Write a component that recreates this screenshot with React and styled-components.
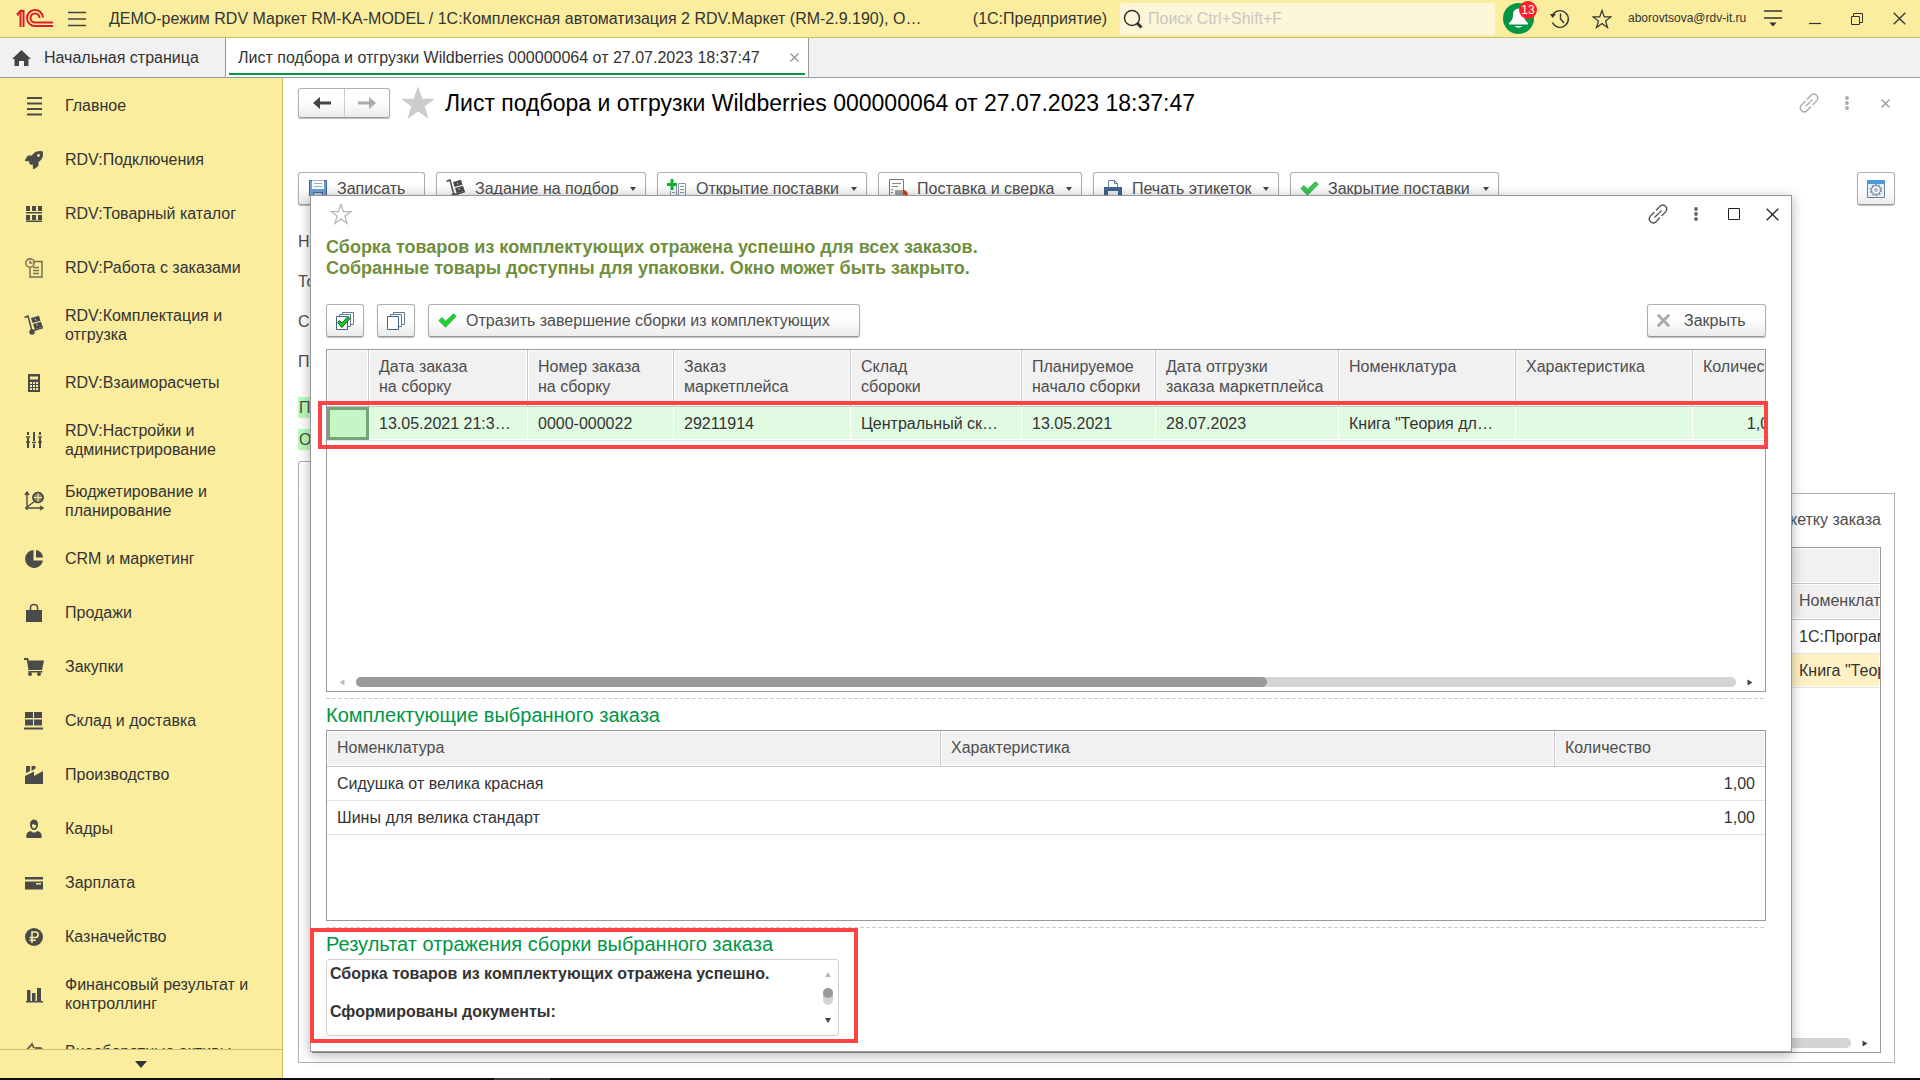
import React from 'react';
import styled, { createGlobalStyle } from 'styled-components';
import { FaRocket } from 'react-icons/fa6';

const GlobalStyle = createGlobalStyle`
    *, *::before, *::after {
        box-sizing: border-box;
    }
    body {
        margin: 0;
        overflow: hidden;
        background: #fff;
        color: #333;
        font-family: "Liberation Sans", Arial, sans-serif;
        font-size: 16px;
        line-height: 19px;
    }
    button, input {
        font: inherit;
        color: inherit;
    }
    svg {
        display: block;
        flex: none;
    }
`;

/* ---------- icons ---------- */

const Svg = ({ size = 20, width, height, box, children, ...rest }) => (
    <svg
        width={width || size}
        height={height || size}
        viewBox={box || `0 0 ${width || size} ${height || size}`}
        fill="none"
        aria-hidden="true"
        {...rest}
    >
        {children}
    </svg>
);

const LogoIcon = () => (
    <Svg width={38} height={20} stroke="#d8202a" strokeWidth="2">
        <path d="M1 5.500 4.500 2v16M1 5.500h2M7.500 1v17M4.500 2h3" />
        <path d="M27 8.500A8 8 0 1 0 19 17h18" />
        <path d="M23.500 9A4.500 4.500 0 1 0 19 13.500h18" />
    </Svg>
);

const BurgerIcon = () => (
    <Svg width={18} height={16} stroke="#444" strokeWidth="1.4">
        <path d="M0 1.500h18M0 8h18M0 14.500h18" />
    </Svg>
);

const HomeIcon = () => (
    <Svg width={19} height={16} fill="#444">
        <path fill="#444" d="M9.500 0 0 9h2.500v7h4.500v-5h5v5h4.500V9H19z" />
    </Svg>
);

const SearchIcon = () => (
    <Svg size={20} stroke="#333">
        <circle cx="9" cy="9" r="7.500" strokeWidth="1.500" />
        <path d="m14 14 4.500 4.500" strokeWidth="3" />
    </Svg>
);

const BellIcon = () => (
    <Svg size={31}>
        <circle cx="15.500" cy="15.500" r="15.500" fill="#009646" />
        <path
            fill="#fff"
            d="M15.500 5.500c-3.500 0-5.500 3-5.500 6.500 0 4-1.500 6-4 8v1.500h19V20c-2.500-2-4-4-4-8 0-3.500-2-6.500-5.500-6.500zM12 23h7c-.5 2-6.500 2-7 0z"
        />
    </Svg>
);

const HistoryIcon = () => (
    <Svg size={20} stroke="#333" strokeWidth="1.400">
        <path d="M2.500 6.500A8.300 8.300 0 1 1 2.500 13.500" />
        <path d="M10.500 4.500V10l3.500 4" />
        <path fill="#333" stroke="none" d="m0 5 6 0-3.500 4z" />
    </Svg>
);

const StarIcon = ({ size = 22, fill = 'none', stroke = '#333' }) => (
    <Svg size={size} box="0 0 22 22" stroke={stroke} strokeWidth="1.300">
        <path
            fill={fill}
            d="m11 1.500 2.500 7.100 7.300.1-5.900 4.400 2.200 7.300-6.100-4.400-6.100 4.400 2.200-7.300L1.200 8.700l7.300-.1z"
        />
    </Svg>
);

const ServiceIcon = () => (
    <Svg width={18} height={17} stroke="#333" strokeWidth="1.400">
        <path d="M0 1h18M0 8h18" />
        <path fill="#333" stroke="none" d="M5.500 12.500h7L9 16.500z" />
    </Svg>
);

const MinimizeIcon = () => (
    <Svg width={12} height={12} stroke="#333" strokeWidth="1.200">
        <path d="M0 10.500h12" />
    </Svg>
);

const RestoreIcon = () => (
    <Svg size={12} stroke="#333">
        <path d="M.5 3.500h8v8h-8zM2.500 3.500v-3h9v9h-3" />
    </Svg>
);

const SquareIcon = () => (
    <Svg size={12} stroke="#222">
        <path d="M.5.5h11v11H.5z" />
    </Svg>
);

const CrossIcon = ({ size = 13, color = '#333', weight = 1.3 }) => (
    <Svg size={size} box="0 0 13 13" stroke={color} strokeWidth={weight}>
        <path d="m.7.7 11.600 11.600M12.300.7.7 12.300" />
    </Svg>
);

const LinkIcon = ({ color }) => (
    <Svg size={20} stroke={color} strokeWidth="1.400" strokeLinecap="round">
        <path d="m8.500 6 3.500-3.700c3.500-3.300 9 1.300 5.600 5.600L14 11.500" />
        <path d="m11.500 14-3.500 3.700c-3.500 3.300-9-1.300-5.600-5.600L6 8.500" />
        <path d="m7 13 6-6" strokeDasharray="5 1.500" />
    </Svg>
);

const DotsIcon = ({ color }) => (
    <Svg width={4} height={14} fill={color}>
        <circle fill={color} cx="2" cy="2" r="1.900" />
        <circle fill={color} cx="2" cy="7" r="1.900" />
        <circle fill={color} cx="2" cy="12" r="1.900" />
    </Svg>
);

const ArrowIcon = ({ color, flip }) => (
    <Svg width={18} height={12} stroke={color} strokeWidth="3">
        <g transform={flip ? 'matrix(-1 0 0 1 18 0)' : undefined}>
            <path d="M5 6h13" />
            <path fill={color} stroke="none" d="M0 6 7 0v12z" />
        </g>
    </Svg>
);

const CheckIcon = ({ color }) => (
    <Svg width={19} height={15}>
        <path fill={color} stroke="#12953a" strokeWidth=".6" d="m.8 7.500 3.200-3 3.500 3.700L15.500.7l2.800 2.600L7.500 14.300z" />
    </Svg>
);

const SaveIcon = () => (
    <Svg size={20}>
        <path fill="#6f9fd8" stroke="#3f6390" d="M1.500 1.500h17v17h-15l-2-2z" />
        <path fill="#fff" d="M4 1.500h12V10H4z" />
        <path stroke="#8bb0d0" d="M6 4.500h8M6 7.500h8" />
        <path fill="#bcc8d4" stroke="#3f6390" d="M5.500 13.500h9v5h-9z" />
    </Svg>
);

const TrolleyIcon = () => (
    <Svg size={20} stroke="#4a4a4a" strokeWidth="1.500">
        <path d="M.5 2.500 4 1l4 15 11-3.500" />
        <circle cx="8" cy="17" r="2" fill="#4a4a4a" />
        <path fill="#4a4a4a" stroke="none" d="m7 3 8-2.300 1.500 5-8 2.300zM9 9l8-2.300 1.700 5.100-8 2.500z" />
        <path stroke="#bbb" strokeWidth="1" d="m11 3.500 1 2M12.500 9l1 2" />
    </Svg>
);

const OpenSupplyIcon = () => (
    <Svg size={20}>
        <path stroke="#0ab52a" strokeWidth="3" d="M5 0v11M0 5.500h10" />
        <path stroke="#8496a5" d="M3.500 12v7.500h6V6M11.500 4.500h7v15h-7z" />
        <path stroke="#8496a5" d="M5 13.500h3M5 16.500h3M13 7.500h4M13 10.500h4M13 13.500h4M13 16.500h4" />
    </Svg>
);

const VerifyIcon = () => (
    <Svg size={20}>
        <path stroke="#777" d="M1.500.5h14v19h-14z" />
        <path stroke="#888" d="M4 4.500h9M4 7.500h6M3 10.500h2M3 13.500h2M3 16.500h2" />
        <path fill="#a0a0a0" d="M7 11h8v7H7z" />
        <path fill="#e0351b" d="M15 11c3 0 5 2 5 6h-5z" />
    </Svg>
);

const PrinterIcon = () => (
    <Svg size={20}>
        <path fill="#fff" stroke="#5f7f9f" d="M5.500 8V1.500h6l3 3V8M11.500 1.500v3h3" />
        <path fill="#3f6387" d="M1 8h18v8H1z" />
        <path fill="#e6edf4" d="M5 12h10v6H5z" />
    </Svg>
);

const GearWindowIcon = () => (
    <Svg size={20}>
        <path fill="#e6eef5" stroke="#6d8299" d="M1.500 1.500h17v17h-17z" />
        <path fill="#4a9bdc" d="M1 1h18v4H1z" />
        <circle cx="10" cy="11" r="5" fill="#fff" stroke="#7b8fa3" strokeWidth="2" strokeDasharray="2 1.100" />
        <circle cx="10" cy="11" r="4.300" fill="#fff" stroke="#7b8fa3" />
        <circle cx="10" cy="11" r="1.400" stroke="#7b8fa3" />
    </Svg>
);

const SheetsIcon = ({ checked }) => (
    <Svg size={20}>
        <path fill="#fff" stroke="#5d7d99" d="M7.500 12V1.500h11v12H16" />
        <path fill="#fff" stroke="#5d7d99" d="M4.500 14V3.500h11v12H13" />
        <path fill="#fff" stroke="#3f6485" d="M1.500 5.500h11v13h-11z" />
        {checked && <path fill="#14cc22" stroke="#0b5a14" d="m2.500 11.500 2-2 2.500 2.500 6-6.500 2 2L7 16.500z" />}
    </Svg>
);

const CaretIcon = () => (
    <Svg width={6} height={4}>
        <path fill="#444" d="M0 0h6L3 4z" />
    </Svg>
);

const dark = '#4a4a4a';

const sideIcons = {
    main: (
        <path stroke={dark} strokeWidth="2" d="M3 2h15M3 7.500h15M3 13h15M3 18.500h15" />
    ),
    catalog: (
        <path
            fill={dark}
            d="M2 2h4v5H2zM8 2h4v5H8zM14 2h4v5h-4zM2 8h16v1.500H2zM2 11h4v5H2zM8 11h4v5H8zM14 11h4v5h-4zM2 16.500h16V18H2z"
        />
    ),
    orders: (
        <g stroke="#75704f" strokeWidth="1.500">
            <path d="M10 3.500h8V19H6v-9" />
            <circle cx="6" cy="5" r="4.200" />
            <path d="M6 2.500V5h2.500M9 9.500h6M9 12.500h6M9 15.500h6" />
        </g>
    ),
    calc: (
        <path
            fill={dark}
            fillRule="evenodd"
            d="M4 1h12v18H4zM6 3.500v3h8v-3zM6 9v2h2V9zM9 9v2h2V9zM12 9v2h2V9zM6 12v2h2v-2zM9 12v2h2v-2zM12 12v2h2v-2zM6 15v2h2v-2zM9 15v2h2v-2zM12 15v2h2v-2z"
        />
    ),
    sliders: (
        <g stroke={dark} strokeWidth="2">
            <path d="M4 2v3M4 8v10M10 2v9M10 14v4M16 2v3M16 8v10" />
            <path d="M2 7h4M8 12.500h4M14 7h4M2 12h4M14 12h4" strokeWidth="1.500" />
        </g>
    ),
    budget: (
        <g stroke={dark} strokeWidth="1.400">
            <path d="M3 2v17M1 17h17M1 4l2-3 2 3M16 15l3 2-3 2M3 16l8-6" />
            <circle cx="14" cy="6.500" r="5" fill="#8a8360" />
            <path d="M14 2v9M10 6.500h8" stroke="#f8ec9e" strokeWidth="1" />
            <circle cx="14" cy="6.500" r="5" />
        </g>
    ),
    pie: (
        <g fill={dark}>
            <path d="M9.500 1A9 9 0 1 0 19 11.500H9.500z" />
            <path d="M12 1v7.500h7A8 8 0 0 0 12 1z" />
        </g>
    ),
    bag: (
        <g>
            <path fill={dark} d="M2 7h16v12H2z" />
            <path stroke={dark} strokeWidth="1.500" d="M6.500 9V4.500c0-4 7-4 7 0V9" />
        </g>
    ),
    cart: (
        <g fill={dark}>
            <path d="M0 1h4l.8 2.500H20L18 13H4.500L2.800 3H0zM4.500 14h14v1.500h-14z" />
            <circle cx="6" cy="17" r="2" />
            <circle cx="15" cy="17" r="2" />
        </g>
    ),
    stock: <path fill={dark} d="M1 1h8v6H1zM10 1h8v6h-8zM1 8.500h8v6H1zM10 8.500h8v6h-8zM0 16.500h19v2H0z" />,
    factory: <path fill={dark} d="M2 1h4v5L2 8zM7.500 1h4v2.500l-4 2.500zM1 11l9-4.500v4.500l9-5v13H1z" />,
    person: (
        <g fill={dark}>
            <path fillRule="evenodd" d="M6 5c0-6 8-6 8 0 0 8-8 8-8 0zm1.800 1c.4 4.500 4 4.500 4.400 0-1.500 0-2.500-.5-3-1z" />
            <path d="M2.500 19c-1-5 2-6.500 4.500-7 1.500 2 4.500 2 6 0 2.500.5 5.500 2 4.500 7z" />
        </g>
    ),
    card: <path fill={dark} fillRule="evenodd" d="M1 4h18v2.500H1zM1 8.500h18v8H1zM12 10v1.500h5V10z" />,
    ruble: (
        <g>
            <circle cx="10" cy="10" r="9" fill={dark} />
            <path stroke="#f8ec9e" strokeWidth="1.600" d="M8 16V5h3.500c3.500 0 3.500 5.500 0 5.500H5.500M5.500 13.300H12" />
        </g>
    ),
    bars: <path fill={dark} d="M3 6h3.500v11H3zM8 9h3.500v8H8zM13 4h4v13h-4zM2 17h17v1.500H2z" />,
    assets: (
        <g stroke="#6b6548" strokeWidth="2">
            <path d="m2 9 6-7 2 4M1 11h5" />
            <path d="M12 6h4c3 0 3 6 0 6h-4z" />
        </g>
    ),
};

const menu = [
    ['main', 'Главное'],
    ['rocket', 'RDV:Подключения'],
    ['catalog', 'RDV:Товарный каталог'],
    ['orders', 'RDV:Работа с заказами'],
    ['trolley', 'RDV:Комплектация и отгрузка'],
    ['calc', 'RDV:Взаиморасчеты'],
    ['sliders', 'RDV:Настройки и администрирование'],
    ['budget', 'Бюджетирование и планирование'],
    ['pie', 'CRM и маркетинг'],
    ['bag', 'Продажи'],
    ['cart', 'Закупки'],
    ['stock', 'Склад и доставка'],
    ['factory', 'Производство'],
    ['person', 'Кадры'],
    ['card', 'Зарплата'],
    ['ruble', 'Казначейство'],
    ['bars', 'Финансовый результат и контроллинг'],
    ['assets', 'Внеоборотные активы'],
];

const commands = [
    { text: 'Записать', icon: <SaveIcon />, width: 127 },
    { text: 'Задание на подбор', icon: <TrolleyIcon />, width: 210, caret: true },
    { text: 'Открытие поставки', icon: <OpenSupplyIcon />, width: 210, caret: true },
    { text: 'Поставка и сверка', icon: <VerifyIcon />, width: 204, caret: true },
    { text: 'Печать этикеток', icon: <PrinterIcon />, width: 186, caret: true },
    { text: 'Закрытие поставки', icon: <CheckIcon color="#3cc653" />, width: 209, caret: true },
];

const orderColumns = [
    { title: '', width: 42 },
    { title: 'Дата заказа\nна сборку', width: 159, value: '13.05.2021 21:3…' },
    { title: 'Номер заказа\nна сборку', width: 146, value: '0000-000022' },
    { title: 'Заказ\nмаркетплейса', width: 177, value: '29211914' },
    { title: 'Склад\nсбороки', width: 171, value: 'Центральный ск…' },
    { title: 'Планируемое\nначало сборки', width: 134, value: '13.05.2021' },
    { title: 'Дата отгрузки\nзаказа маркетплейса', width: 183, value: '28.07.2023' },
    { title: 'Номенклатура', width: 177, value: 'Книга "Теория дл…' },
    { title: 'Характеристика', width: 177, value: '' },
    { title: 'Количество', width: 95, value: '1,00', right: true },
];

const parts = [
    ['Сидушка от велика красная', '1,00'],
    ['Шины для велика стандарт', '1,00'],
];

function SideIcon({ name }) {
    if (name === 'rocket') return <FaRocket size={18} color={dark} />;
    if (name === 'trolley') return <TrolleyIcon />;
    return <Svg>{sideIcons[name]}</Svg>;
}

function TitleBar() {
    return (
        <Top>
            <LogoIcon />
            <IconButton $ml={14} aria-label="Меню"><BurgerIcon /></IconButton>
            <AppTitle>
                <span>ДЕМО-режим RDV Маркет RM-KA-MODEL / 1С:Комплексная автоматизация 2 RDV.Маркет (RM-2.9.190), О…</span>
                <span>(1С:Предприятие)</span>
            </AppTitle>
            <Search>
                <SearchIcon />
                <SearchInput type="text" aria-label="Поиск" placeholder="Поиск Ctrl+Shift+F" />
            </Search>
            <TopActions>
                <Notifications aria-label="Оповещения">
                    <BellIcon />
                    <Badge>13</Badge>
                </Notifications>
                <Slot><IconButton aria-label="История"><HistoryIcon /></IconButton></Slot>
                <Slot><IconButton aria-label="Избранное"><StarIcon size={20} /></IconButton></Slot>
                <User href="#user">aborovtsova@rdv-it.ru</User>
                <Slot><IconButton aria-label="Сервис"><ServiceIcon /></IconButton></Slot>
                <Slot><IconButton aria-label="Свернуть"><MinimizeIcon /></IconButton></Slot>
                <Slot><IconButton aria-label="Восстановить"><RestoreIcon /></IconButton></Slot>
                <Slot><IconButton aria-label="Закрыть приложение"><CrossIcon /></IconButton></Slot>
            </TopActions>
        </Top>
    );
}

function Document() {
    return (
        <Page>
            <PageHead>
                <NavButtons>
                    <NavButton aria-label="Назад"><ArrowIcon color="#444" /></NavButton>
                    <NavButton aria-label="Вперед"><ArrowIcon color="#aaa" flip /></NavButton>
                </NavButtons>
                <IconButton $ml={12} aria-label="В избранное"><StarIcon size={32} fill="#ccc" stroke="#ccc" /></IconButton>
                <PageTitle>Лист подбора и отгрузки Wildberries 000000064 от 27.07.2023 18:37:47</PageTitle>
                <Tools $overhang={9}>
                    <IconButton aria-label="Ссылка"><LinkIcon color="#aaa" /></IconButton>
                    <IconButton aria-label="Еще"><DotsIcon color="#aaa" /></IconButton>
                    <IconButton aria-label="Закрыть страницу"><CrossIcon size={9} color="#999" weight={2} /></IconButton>
                </Tools>
            </PageHead>
            <Toolbar>
                {commands.map((c) => (
                    <Button key={c.text} $width={c.width}>
                        {c.icon}
                        {c.text}
                        {c.caret && <Caret><CaretIcon /></Caret>}
                    </Button>
                ))}
                <Spacer />
                <Button $square aria-label="Настройки"><GearWindowIcon /></Button>
            </Toolbar>
            <Fields>
                <Field>Номер:</Field>
                <Field>Товар:</Field>
                <Field>Склад:</Field>
                <Field>Поставка:</Field>
            </Fields>
            <Chips>
                <Chip>Подбор</Chip>
                <Chip>Отгрузка</Chip>
            </Chips>
            <PageTab />
            <Panel>
                <PanelLine>Печатать этикетку заказа</PanelLine>
                <Frame>
                    <Table>
                        <colgroup>
                            <col />
                            <col width="91" />
                        </colgroup>
                        <thead>
                            <tr><Th $height={36} colSpan={2} /></tr>
                            <tr><Th $height={36} /><Th $height={36}>Номенклатура</Th></tr>
                        </thead>
                        <tbody>
                            <tr><Td /><Td>1С:Программа</Td></tr>
                            <tr><Td $fill="#fff1c4" /><Td $fill="#fff1c4">Книга "Теория</Td></tr>
                        </tbody>
                    </Table>
                    <Spacer />
                    <HScroll>
                        <Tri $dir="left" $muted />
                        <Track><Thumb style={{ width: '45%' }} /></Track>
                        <Tri $dir="right" />
                    </HScroll>
                </Frame>
            </Panel>
        </Page>
    );
}

function AssemblyWindow() {
    return (
        <Window role="dialog" aria-label="Сборка из комплектующих">
            <WindowHead>
                <IconButton aria-label="В избранное"><StarIcon stroke="#b3b8be" /></IconButton>
                <Spacer />
                <Tools $overhang={25}>
                    <IconButton aria-label="Ссылка"><LinkIcon color="#555" /></IconButton>
                    <IconButton aria-label="Еще"><DotsIcon color="#666" /></IconButton>
                    <IconButton aria-label="Развернуть"><SquareIcon /></IconButton>
                    <IconButton aria-label="Закрыть окно"><CrossIcon color="#222" /></IconButton>
                </Tools>
            </WindowHead>
            <Message>
                Сборка товаров из комплектующих отражена успешно для всех заказов.<br />
                Собранные товары доступны для упаковки. Окно может быть закрыто.
            </Message>
            <WindowBar>
                <Button $square aria-label="Выделить все"><SheetsIcon checked /></Button>
                <Button $square aria-label="Снять выделение"><SheetsIcon /></Button>
                <Button $width={432}><CheckIcon color="#1fd12d" />Отразить завершение сборки из комплектующих</Button>
                <Spacer />
                <Button $width={119} $gap={14}><CrossIcon color="#aaa" weight={3} />Закрыть</Button>
            </WindowBar>
            <OrdersArea>
                <Frame>
                    <Table $width={1461}>
                        <colgroup>
                            {orderColumns.map((c, i) => <col key={i} width={c.width} />)}
                        </colgroup>
                        <thead>
                            <tr>
                                {orderColumns.map((c, i) => <Th key={i} $height={57}>{c.title}</Th>)}
                            </tr>
                        </thead>
                        <tbody>
                            <tr>
                                {orderColumns.map((c, i) => (
                                    <Td key={i} $fill="#e1fae2" $right={c.right} $current={i === 0}>{c.value}</Td>
                                ))}
                            </tr>
                        </tbody>
                    </Table>
                    <Spacer />
                    <HScroll>
                        <Tri $dir="left" $muted />
                        <Track><Thumb style={{ width: '66%' }} /></Track>
                        <Tri $dir="right" />
                    </HScroll>
                </Frame>
                <RowMark />
            </OrdersArea>
            <Divider />
            <GroupTitle>Комплектующие выбранного заказа</GroupTitle>
            <PartsFrame>
                <Table>
                    <colgroup>
                        <col />
                        <col />
                        <col width="210" />
                    </colgroup>
                    <thead>
                        <tr>
                            <Th $height={36}>Номенклатура</Th>
                            <Th $height={36}>Характеристика</Th>
                            <Th $height={36}>Количество</Th>
                        </tr>
                    </thead>
                    <tbody>
                        {parts.map(([name, qty]) => (
                            <tr key={name}><Td>{name}</Td><Td /><Td $right>{qty}</Td></tr>
                        ))}
                    </tbody>
                </Table>
            </PartsFrame>
            <Divider />
            <Result>
                <GroupTitle>Результат отражения сборки выбранного заказа</GroupTitle>
                <ResultBox>
                    <ResultText>
                        <p>Сборка товаров из комплектующих отражена успешно.</p>
                        <p>Сформированы документы:</p>
                    </ResultText>
                    <VScroll>
                        <Tri $dir="up" $muted />
                        <VTrack><VThumb /></VTrack>
                        <Tri $dir="down" />
                    </VScroll>
                </ResultBox>
                <ResultMark />
            </Result>
        </Window>
    );
}

function App() {
    return (
        <Shell>
            <GlobalStyle />
            <TitleBar />
            <Tabs>
                <Tab href="#home"><HomeIcon />Начальная страница</Tab>
                <ActiveTab>
                    <a href="#sheet">Лист подбора и отгрузки Wildberries 000000064 от 27.07.2023 18:37:47</a>
                    <IconButton aria-label="Закрыть вкладку"><CrossIcon size={9} color="#999" weight={2} /></IconButton>
                </ActiveTab>
            </Tabs>
            <Body>
                <Sidebar>
                    <MenuList>
                        {menu.map(([icon, text]) => (
                            <MenuItem key={text} href="#section">
                                <MenuGlyph><SideIcon name={icon} /></MenuGlyph>
                                <span>{text}</span>
                            </MenuItem>
                        ))}
                    </MenuList>
                    <MoreButton aria-label="Прокрутить вниз">
                        <Svg width={12} height={7}><path fill="#333" d="M0 0h12L6 7z" /></Svg>
                    </MoreButton>
                </Sidebar>
                <Document />
                <AssemblyWindow />
            </Body>
            <Taskbar><TaskbarItem /></Taskbar>
        </Shell>
    );
}

/* ---------- shell ---------- */

const Shell = styled.div`
    display: flex;
    flex-direction: column;
    height: 100vh;
`;

const Spacer = styled.div`
    flex: 1;
`;

const IconButton = styled.button`
    display: flex;
    align-items: center;
    justify-content: center;
    flex: none;
    padding: 0;
    margin-left: ${(p) => p.$ml || 0}px;
    border: none;
    background: none;
`;

const Top = styled.header`
    display: flex;
    align-items: center;
    flex: none;
    height: 38px;
    padding-left: 16px;
    border-bottom: 1px solid #c9bd6d;
    background: #fbed9e;
`;

const AppTitle = styled.div`
    display: flex;
    flex: 1;
    justify-content: space-between;
    min-width: 0;
    margin: 0 13px 0 23px;
    white-space: nowrap;
`;

const Search = styled.label`
    display: flex;
    align-items: center;
    gap: 5px;
    width: 375px;
    height: 32px;
    padding-left: 3px;
    border-radius: 3px;
    background: #fdf6d8;
`;

const SearchInput = styled.input`
    flex: 1;
    min-width: 0;
    padding: 0;
    border: none;
    outline: none;
    background: none;
    &::placeholder {
        color: #c9c8c0;
        opacity: 1;
    }
`;

const TopActions = styled.div`
    display: flex;
    align-items: center;
    padding-left: 8px;
`;

const Notifications = styled.button`
    position: relative;
    margin-right: 5px;
    padding: 0;
    border: none;
    background: none;
`;

const Badge = styled.span`
    position: absolute;
    top: -2px;
    right: -3px;
    width: 18px;
    height: 18px;
    border-radius: 9px;
    background: #ff2027;
    color: #fff;
    font-size: 12px;
    line-height: 18px;
    text-align: center;
`;

const Slot = styled.div`
    display: flex;
    justify-content: center;
    width: 42px;
`;

const User = styled.a`
    width: 129px;
    padding-left: 5px;
    color: #333;
    font-size: 12px;
    text-decoration: none;
    white-space: nowrap;
`;

const Tabs = styled.nav`
    display: flex;
    flex: none;
    height: 40px;
    border-bottom: 1px solid #999;
    background: #f1f1f1;
`;

const Tab = styled.a`
    display: flex;
    align-items: center;
    gap: 13px;
    width: 226px;
    padding-left: 12px;
    border-right: 1px solid #999;
    color: #333;
    text-decoration: none;
`;

const ActiveTab = styled.div`
    display: flex;
    align-items: center;
    justify-content: space-between;
    width: 583px;
    padding: 0 9px 0 12px;
    border-right: 1px solid #999;
    background: linear-gradient(#009646, #009646) 3px 35px / 576px 2px no-repeat #fff;
    a {
        color: #333;
        text-decoration: none;
        white-space: nowrap;
    }
`;

const Body = styled.div`
    position: relative;
    display: flex;
    flex: 1;
    min-height: 0;
`;

const Taskbar = styled.footer`
    flex: none;
    height: 2px;
    padding-left: 494px;
    background: #0d0d0f;
`;

const TaskbarItem = styled.div`
    width: 56px;
    height: 2px;
    background: #3a3a3c;
`;

/* ---------- sections panel ---------- */

const Sidebar = styled.aside`
    display: flex;
    flex-direction: column;
    flex: none;
    width: 283px;
    border-right: 1px solid #c9bd6d;
    background: #fbed9e;
`;

const MenuList = styled.nav`
    flex: 1;
    min-height: 0;
    overflow: hidden;
`;

const MenuItem = styled.a`
    display: flex;
    align-items: center;
    gap: 21px;
    min-height: 54px;
    padding: 12px 20px 11px 24px;
    color: #333;
    text-decoration: none;
`;

const MenuGlyph = styled.span`
    display: flex;
    justify-content: center;
    flex: none;
    width: 20px;
`;

const MoreButton = styled.button`
    display: flex;
    align-items: center;
    justify-content: center;
    flex: none;
    height: 29px;
    border: none;
    border-top: 1px solid #c9bd6d;
    background: none;
`;

/* ---------- document page ---------- */

const Page = styled.main`
    display: flex;
    flex-direction: column;
    flex: 1;
    min-width: 0;
    padding: 10px 25px 15px 15px;
    color: #4d4d4d;
`;

const PageHead = styled.div`
    display: flex;
    align-items: center;
    height: 30px;
`;

const NavButtons = styled.div`
    display: flex;
    height: 30px;
    border: 1px solid #b0b0b0;
    border-bottom-color: #999;
    border-radius: 3px;
    background: linear-gradient(#fff 40%, #ececec);
    box-shadow: 0 1px 1px #bbb;
`;

const NavButton = styled.button`
    display: flex;
    align-items: center;
    justify-content: center;
    width: 45px;
    padding: 0;
    border: none;
    background: none;
    & + & {
        border-left: 1px solid #ccc;
    }
`;

const PageTitle = styled.h1`
    flex: 1;
    margin: 0 0 0 11px;
    color: #000;
    font-size: 23px;
    font-weight: normal;
    line-height: 30px;
    white-space: nowrap;
`;

/* the icon cells are wider than the icons, so the last one hangs over the content edge */
const Tools = styled.div`
    display: flex;
    align-items: center;
    margin-right: -${(p) => p.$overhang}px;
    ${IconButton} {
        width: 38px;
        height: 30px;
    }
`;

const Toolbar = styled.div`
    display: flex;
    gap: 11px;
    margin-top: 54px;
`;

const Button = styled.button`
    display: flex;
    align-items: center;
    justify-content: ${(p) => (p.$square ? 'center' : 'flex-start')};
    gap: ${(p) => p.$gap || 9}px;
    flex: none;
    width: ${(p) => (p.$square ? 38 : p.$width)}px;
    height: 33px;
    padding: 0 ${(p) => (p.$square ? 0 : 9)}px;
    border: 1px solid #b0b0b0;
    border-bottom-color: #999;
    border-radius: 3px;
    background: linear-gradient(#fff 40%, #ececec);
    box-shadow: 0 1px 1px #bbb;
    color: #4d4d4d;
    white-space: nowrap;
`;

const Caret = styled.span`
    margin-left: auto;
`;

const Fields = styled.div`
    margin-top: 17px;
`;

const Field = styled.div`
    height: 40px;
    line-height: 40px;
`;

const Chips = styled.div`
    display: flex;
    flex-direction: column;
    align-items: flex-start;
    gap: 11px;
    margin: 15px 0 11px;
`;

const Chip = styled.span`
    padding: 1px;
    background: #b9fdb9;
`;

const PageTab = styled.div`
    width: 200px;
    height: 32px;
    border: 1px solid #b0b0b0;
    border-bottom: none;
    border-radius: 3px 0 0 0;
`;

const Panel = styled.section`
    display: flex;
    flex-direction: column;
    flex: 1;
    min-height: 0;
    padding: 0 13px 9px;
    border: 1px solid #b0b0b0;
    border-top-color: transparent;
    background: linear-gradient(#b0b0b0, #b0b0b0) 100% 0 / calc(100% - 199px) 1px no-repeat border-box;
`;

const PanelLine = styled.div`
    padding: 16px 0 18px;
    text-align: right;
`;

/* ---------- tables ---------- */

const Frame = styled.div`
    display: flex;
    flex-direction: column;
    flex: 1;
    min-height: 0;
    border: 1px solid #999;
    background: #fff;
    overflow: hidden;
`;

const PartsFrame = styled(Frame)`
    flex: none;
    height: 191px;
`;

const Table = styled.table`
    flex: none;
    width: ${(p) => (p.$width ? `${p.$width}px` : '100%')};
    border-collapse: separate;
    border-spacing: 0;
    table-layout: fixed;
`;

const Th = styled.th`
    height: ${(p) => p.$height}px;
    padding: 7px 0 0 10px;
    border-right: 1px solid #c6c6c6;
    border-bottom: 1px solid #c6c6c6;
    background: #f1f1f1;
    box-shadow: inset 0 0 0 1px #fff;
    color: #4d4d4d;
    font-weight: normal;
    line-height: 20px;
    text-align: left;
    vertical-align: top;
    white-space: pre;
    overflow: hidden;
    &:last-child {
        border-right: none;
    }
`;

const Td = styled.td`
    height: 34px;
    padding: 0 10px;
    border-bottom: 1px solid #e2e2e2;
    background: ${(p) => p.$fill || '#fff'};
    box-shadow: ${(p) => (p.$current ? 'inset 0 0 0 3px #74a578' : 'inset -1px -1px 0 #fff')};
    color: #333;
    text-align: ${(p) => (p.$right ? 'right' : 'left')};
    white-space: nowrap;
    overflow: hidden;
    ${(p) => p.$current && 'background: #c6f6c6;'}
`;

const HScroll = styled.div`
    display: flex;
    align-items: center;
    gap: 11px;
    height: 18px;
    padding: 0 12px;
`;

const Track = styled.div`
    flex: 1;
    height: 10px;
    border-radius: 5px;
    background: #d4d4d4;
`;

const Thumb = styled.div`
    height: 10px;
    border-radius: 5px;
    background: #999;
`;

const angles = { up: 0, right: 90, down: 180, left: 270 };

const Tri = styled.i`
    flex: none;
    border: 3px solid transparent;
    border-top: none;
    border-bottom: 5px solid ${(p) => (p.$muted ? '#bbb' : '#444')};
    transform: rotate(${(p) => angles[p.$dir]}deg);
`;

/* ---------- assembly window ---------- */

const Window = styled.section`
    position: absolute;
    top: 117px;
    right: 128px;
    bottom: 26px;
    left: 310px;
    display: flex;
    flex-direction: column;
    padding: 0 25px 15px 15px;
    border: 1px solid #999;
    background: #fff;
    box-shadow: 0 3px 12px rgba(0, 0, 0, 0.3);
`;

const WindowHead = styled.div`
    display: flex;
    align-items: center;
    height: 36px;
    padding-left: 4px;
`;

const Message = styled.p`
    margin: 5px 0 25px;
    color: #6f8f3c;
    font-size: 18px;
    font-weight: bold;
    line-height: 21px;
`;

const WindowBar = styled.div`
    display: flex;
    gap: 13px;
    margin-bottom: 12px;
`;

const OrdersArea = styled.div`
    position: relative;
    display: flex;
    flex: 1;
    min-height: 0;
`;

const RowMark = styled.div`
    position: absolute;
    top: 52px;
    right: -2px;
    left: -8px;
    height: 48px;
    border: 4px solid #ff4343;
`;

const Divider = styled.div`
    flex: none;
    height: 1px;
    margin: 6px 0;
    background: repeating-linear-gradient(90deg, #ccc 0 4px, transparent 4px 6px);
`;

const GroupTitle = styled.h2`
    margin: 0 0 4px;
    color: #009646;
    font-size: 20px;
    font-weight: normal;
    line-height: 21px;
    white-space: nowrap;
`;

const Result = styled.div`
    position: relative;
    flex: none;
    width: 513px;
`;

const ResultMark = styled.div`
    position: absolute;
    inset: -6px -19px -7px -16px;
    border: 4px solid #ff4343;
`;

const ResultBox = styled.div`
    display: flex;
    height: 77px;
    border: 1px solid #d0d0d0;
    border-radius: 3px;
`;

const ResultText = styled.div`
    flex: 1;
    padding: 4px 3px;
    font-weight: bold;
    p {
        margin: 0 0 19px;
    }
`;

const VScroll = styled.div`
    display: flex;
    flex-direction: column;
    align-items: center;
    width: 20px;
    padding: 12px 0;
`;

const VTrack = styled.div`
    width: 10px;
    height: 20px;
    margin: 11px 0 13px;
    border-radius: 5px;
    background: #d4d4d4;
`;

const VThumb = styled.div`
    width: 10px;
    height: 10px;
    border-radius: 5px;
    background: #999;
`;

export default App;
